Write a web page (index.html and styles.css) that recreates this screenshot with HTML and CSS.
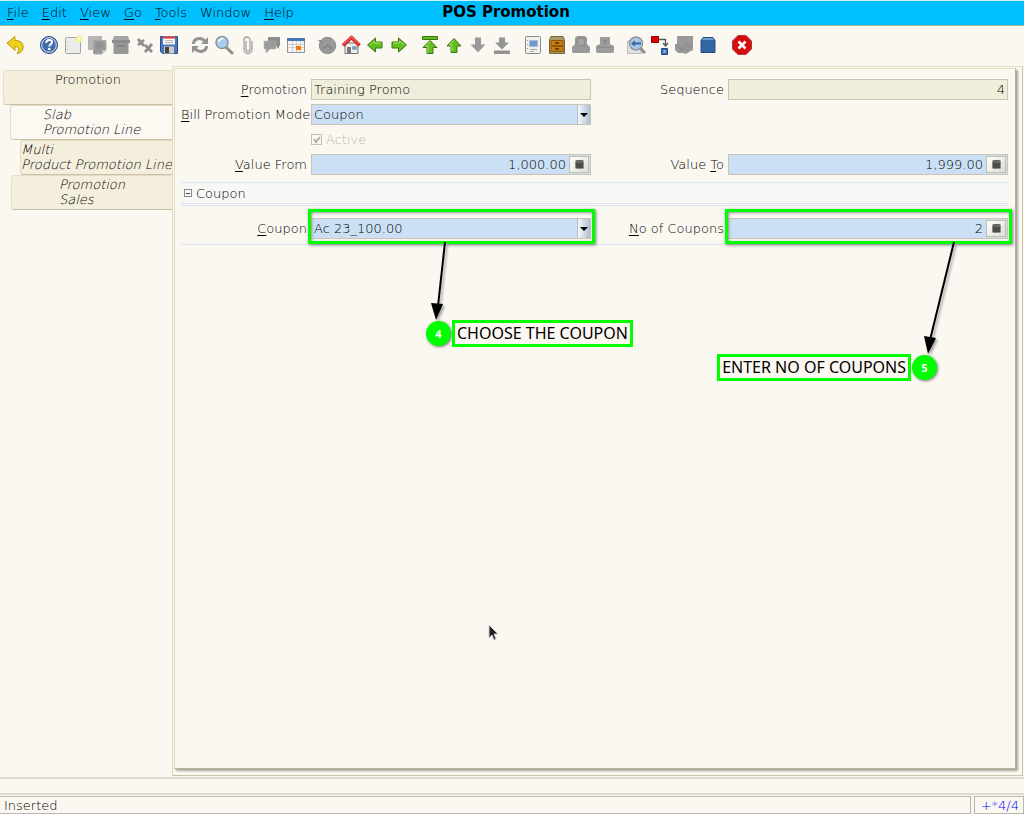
FILE: index.html
```
<!DOCTYPE html>
<html lang="en">
<head>
<meta charset="UTF-8">
<meta name="viewport" content="width=device-width, initial-scale=1.0">
<title>POS Promotion</title>
<link rel="stylesheet" href="styles.css">
</head>
<body>
<header class="menubar">
  <nav class="menus">
    <a href="#"><u>F</u>ile</a>
    <a href="#"><u>E</u>dit</a>
    <a href="#"><u>V</u>iew</a>
    <a href="#"><u>G</u>o</a>
    <a href="#"><u>T</u>ools</a>
    <a href="#">Window</a>
    <a href="#"><u>H</u>elp</a>
  </nav>
  <h1>POS Promotion</h1>
</header>

<div class="toolbar">
  <div class="tools edge">
    <button type="button" aria-label="Undo"><svg viewBox="0 0 20 20"><path d="M2 8l8-6.500v4c6 0 9 3 8 8-1 3-3 5-6 5 3-3 2-7-2-7v4z" fill="#f0d21c" stroke="#b59a10"/></svg></button>
  </div>
  <div class="tools">
    <button type="button" aria-label="Help"><svg viewBox="0 0 20 20"><circle cx="10" cy="10" r="8.500" fill="#3f6cab" stroke="#2c4d80"/><circle cx="10" cy="10" r="7.300" fill="none" stroke="#dfe8f4"/><path d="M7.200 8c0-4 5.800-4 5.800-.8 0 2-2.700 2-2.700 4.300" fill="none" stroke="#fff" stroke-width="2"/><circle cx="10.200" cy="14" r="1.300" fill="#fff"/></svg></button>
    <button type="button" aria-label="New"><svg viewBox="0 0 20 20"><rect x="2.500" y="2.500" width="15" height="16" rx="1" fill="#ececea" stroke="#a2a49f"/><path d="M4.500 6v1M4.500 10v1M4.500 14v1" stroke="#bbb"/><circle cx="16" cy="4" r="3.500" fill="#f4ee91"/><circle cx="16" cy="4" r="1.500" fill="#fffde0"/></svg></button>
    <button type="button" aria-label="Copy"><svg viewBox="0 0 20 20"><path d="M1 1h14v14H1z" fill="#b5b5b5"/><path d="M6.500 5.500h12.500v9.500l-4 4H6.500z" fill="#999" stroke="#aaa"/><path d="M9 9h7M9 11h7M9 13h5" stroke="#8a8a8a"/><path d="M15 19v-4h4" fill="#c4c4c4"/></svg></button>
    <button type="button" aria-label="Delete"><svg viewBox="0 0 20 20"><path d="M3 1h14l2 6H1z" fill="#a5a5a5"/><path d="M1 5h18v3H1z" fill="#8c8c8c"/><path d="M2.500 8h15v11h-15z" fill="#989898"/><path d="M6 11h8" stroke="#858585" stroke-width="2"/></svg></button>
    <button type="button" aria-label="Delete selection"><svg viewBox="0 0 20 20"><path d="M3 4l6 7M9 5l-6 5M10 10l7 7M17 9l-7 8" stroke="#8e8e8e" stroke-width="2.800"/></svg></button>
    <button type="button" aria-label="Save"><svg viewBox="0 0 20 20"><path d="M1.500 1.500h17v17h-15l-2-2z" fill="#4c78b8" stroke="#274e8c"/><path d="M4 1.500h12v8H4z" fill="#f7f7f7"/><path d="M4 1.500h12v2H4z" fill="#e03030"/><path d="M6 5.500h8M6 7.500h8" stroke="#bbb"/><path d="M5 11.500h10v7H5z" fill="#ccc"/><path d="M6 12h4v6H6z" fill="#444"/></svg></button>
  </div>
  <div class="tools">
    <button type="button" aria-label="Refresh"><svg viewBox="0 0 20 20"><path d="M3.500 9c0-6 8-7 11-3M16.500 11c0 6-8 7-11 3" fill="none" stroke="#929292" stroke-width="3"/><path d="M18 2v7h-7zM2 18v-7h7z" fill="#929292"/></svg></button>
    <button type="button" aria-label="Find"><svg viewBox="0 0 20 20"><path d="M12 12l6 6" stroke="#8d8f8a" stroke-width="3" stroke-linecap="round"/><circle cx="8" cy="7.500" r="6" fill="#a9cdf0" stroke="#8c9299" stroke-width="1.500"/><path d="M4.500 7c1-3 3-4 5-3" fill="none" stroke="#e9f4ff" stroke-width="2"/></svg></button>
    <button type="button" aria-label="Attachment"><svg viewBox="0 0 20 20"><path d="M8 6v8c0 3 4 3 4 0V5c0-4-6-4-6 0v9c0 6 8 6 8 0V6" fill="none" stroke="#a3a3a3" stroke-width="1.300"/></svg></button>
    <button type="button" aria-label="Chat"><svg viewBox="0 0 20 20"><path d="M7 2h10q1 0 1 1v7q0 1-1 1v3l-3-3H7q-1 0-1-1V3q0-1 1-1z" fill="#8c8c8c"/><path d="M3 6h10q1 0 1 1v6q0 1-1 1H8l-4 4v-4H3q-1 0-1-1V7q0-1 1-1z" fill="#9c9c9c" stroke="#b3b3b3" stroke-width=".5"/></svg></button>
    <button type="button" aria-label="Grid toggle"><svg viewBox="0 0 20 20"><path d="M1.500 3.500h17v14h-17z" fill="#f3f3f3" stroke="#91948f"/><path d="M1 3h18v3H1z" fill="#4377b5"/><path d="M2 9.500h16M2 12.500h16M6.500 6v11M10.500 6v11M14.500 6v11" stroke="#cfcfcf"/><path d="M10 11h5v4h-5z" fill="#f57900"/></svg></button>
  </div>
  <div class="tools">
    <button type="button" aria-label="History"><svg viewBox="0 0 20 20"><circle cx="10.500" cy="10.500" r="8.200" fill="#999" stroke="#8a8a8a"/><path d="M1 5h4v4z" fill="#8a8a8a"/><path d="M6 14l5-4 4 4" fill="none" stroke="#808080" stroke-width="1.500"/></svg></button>
    <button type="button" aria-label="Home"><svg viewBox="0 0 20 20"><path d="M4 8h13v10.500H4z" fill="#eee" stroke="#777"/><path d="M6 12h4v6.500H6z" fill="#777"/><path d="M11.500 11.500h4v3h-4z" fill="#719fcd" stroke="#888" stroke-width=".5"/><path d="M2 10.500l8.500-8 8 8" fill="none" stroke="#c22" stroke-width="3.600" stroke-linejoin="round"/><path d="M2.500 9.500l8-7.500 7.500 7.500" fill="none" stroke="#f25c5c" stroke-width="1.400"/></svg></button>
    <button type="button" aria-label="Previous tab"><svg viewBox="0 0 20 20"><path d="M2.500 10l8-7v4h6.500v6h-6.500v4z" fill="#62bf1e" stroke="#38750c"/><path d="M5 10l4.500-4v2H16" fill="none" stroke="#a7e36e"/></svg></button>
    <button type="button" aria-label="Next tab"><svg viewBox="0 0 20 20"><path d="M17.500 10l-8-7v4H3v6h6.500v4z" fill="#62bf1e" stroke="#38750c"/><path d="M15 10l-4.500-4v2H4" fill="none" stroke="#a7e36e"/></svg></button>
  </div>
  <div class="tools">
    <button type="button" aria-label="First record"><svg viewBox="0 0 20 20"><path d="M2.500 1.500h15v3h-15zM10 5.500l7 7h-4v6H7v-6H3z" fill="#62bf1e" stroke="#38750c"/><path d="M10 7l-4 4.500h2v6" fill="none" stroke="#a7e36e"/></svg></button>
    <button type="button" aria-label="Previous record"><svg viewBox="0 0 20 20"><path d="M10 3.500l7 7.500h-4v6.500H7V11H3z" fill="#62bf1e" stroke="#38750c"/><path d="M10 5l-4.500 5H8v6.500" fill="none" stroke="#a7e36e"/></svg></button>
    <button type="button" aria-label="Next record"><svg viewBox="0 0 20 20"><path d="M10 17.500l7.500-8H13v-7H7v7H2.500z" fill="#999"/></svg></button>
    <button type="button" aria-label="Last record"><svg viewBox="0 0 20 20"><path d="M10 14.500l7-7h-4v-5H7v5H3zM2 15.500h16v3.500H2z" fill="#929292"/></svg></button>
  </div>
  <div class="tools">
    <button type="button" aria-label="Report"><svg viewBox="0 0 20 20"><rect x="2.500" y="1.500" width="15" height="17" rx="1" fill="#f1f1ef" stroke="#888a85"/><path d="M6.500 5.500h8v6h-8z" fill="#6c98cd" stroke="#a9bed6"/><path d="M7 14.500h7M7 16.500h4" stroke="#aaa"/><path d="M4.500 5v1M4.500 9v1M4.500 13v1" stroke="#999"/></svg></button>
    <button type="button" aria-label="Archive"><svg viewBox="0 0 20 20"><path d="M4 1.500h12l1.500 3v14h-15v-14z" fill="#a99a68" stroke="#75683e"/><path d="M4 5.500h12v5H4zM4 11.500h12v5H4z" fill="#cc7e0b" stroke="#8f5902"/><path d="M8 8h4M8 14h4" stroke="#4f3607" stroke-width="1.500"/></svg></button>
    <button type="button" aria-label="Print preview"><svg viewBox="0 0 20 20"><path d="M6 1h8l2 2v6l3 3v5l-1 1H2l-1-1v-5l3-3V3z" fill="#999"/><circle cx="10" cy="7" r="4" fill="#a4a4a4" stroke="#8a8a8a"/><path d="M12 10l4 3" stroke="#8a8a8a" stroke-width="1.500"/></svg></button>
    <button type="button" aria-label="Print"><svg viewBox="0 0 20 20"><path d="M5 2h10v7l4 2v6l-1 1H2l-1-1v-6l4-2z" fill="#9c9c9c"/><path d="M10 4v5M8 6h4" stroke="#868686" stroke-width="1.500"/><path d="M2 12.500h16" stroke="#8c8c8c"/></svg></button>
  </div>
  <div class="tools">
    <button type="button" aria-label="Zoom across"><svg viewBox="0 0 20 20"><path d="M1.500 6h14v12.500h-14z" fill="#e2e2e0" stroke="#bbb"/><path d="M14 13l5 5" stroke="#8d8f8a" stroke-width="3"/><circle cx="10" cy="8.500" r="6.500" fill="#a9c8e6" stroke="#91979d" stroke-width="1.500"/><path d="M5 8.500l4-3v2h6v2H9v2z" fill="#3465a4"/></svg></button>
    <button type="button" aria-label="Workflow"><svg viewBox="0 0 20 20"><path d="M1.500 1.500h7v6h-7z" fill="#d00" stroke="#900"/><path d="M9 4.500h6.500V10M13 8l2.500 3L18 8" fill="none" stroke="#555" stroke-width="1.300"/><path d="M11.500 13.500h6v6h-6z" fill="#3e6fae" stroke="#204a87"/><path d="M13.500 15.500h2v2h-2z" fill="#b8d0ec"/></svg></button>
    <button type="button" aria-label="Request"><svg viewBox="0 0 20 20"><path d="M3 1h16v14l-4 2-3 2-3-1H4l-3-3V9h2z" fill="#999"/><path d="M2 11l5 3 5-5 6 3M5 17l5-3 5 2" fill="none" stroke="#868686"/></svg></button>
    <button type="button" aria-label="Product info"><svg viewBox="0 0 20 20"><path d="M5 2.500h10l2 3v12H3v-12z" fill="#3465a4" stroke="#284f84"/><path d="M5 3h10l1 2H4z" fill="#6f9bd0"/></svg></button>
  </div>
  <div class="tools edge">
    <button type="button" aria-label="Exit"><svg viewBox="0 0 20 20"><path d="M6 .5h8L19.500 6v8L14 19.500H6L.5 14V6z" fill="#d40e0e" stroke="#b33"/><path d="M6.500 6.500l7 7M13.500 6.500l-7 7" stroke="#fff" stroke-width="2.600"/></svg></button>
  </div>
</div>

<main class="window">
  <nav class="tabs">
    <button type="button" class="tab main-tab"><span>Promotion</span></button>
    <button type="button" class="tab slab current"><span>Slab<br>Promotion Line</span></button>
    <button type="button" class="tab multi"><span>Multi<br>Product Promotion Line</span></button>
    <button type="button" class="tab sales"><span>Promotion<br>Sales</span></button>
  </nav>

  <div class="frame">
    <form class="panel">
      <div class="fields">
        <label for="promotion"><u>P</u>romotion</label>
        <div class="field readonly"><input type="text" id="promotion" value="Training Promo" readonly></div>
        <label for="sequence">Sequence</label>
        <div class="field readonly number"><input type="text" id="sequence" value="4" readonly></div>
      </div>
      <div class="fields">
        <label for="mode"><u>B</u>ill Promotion Mode</label>
        <div class="field combo"><select id="mode"><option>Coupon</option></select></div>
      </div>
      <div class="fields">
        <div class="check">
          <input type="checkbox" id="active" checked disabled>
          <label for="active">Active</label>
        </div>
      </div>
      <div class="fields">
        <label for="valueFrom"><u>V</u>alue From</label>
        <div class="field number">
          <input type="text" id="valueFrom" value="1,000.00">
          <button type="button" class="calc" aria-label="Calculator"></button>
        </div>
        <label for="valueTo">Value <u>T</u>o</label>
        <div class="field number">
          <input type="text" id="valueTo" value="1,999.00">
          <button type="button" class="calc" aria-label="Calculator"></button>
        </div>
      </div>

      <h2 class="group"><button type="button" class="toggle" aria-label="Collapse"></button>Coupon</h2>

      <div class="fields coupon">
        <label for="coupon"><u>C</u>oupon</label>
        <div class="field combo">
          <select id="coupon"><option>Ac 23_100.00</option></select>
          <span class="highlight"></span>
          <svg class="arrow arrow-left" viewBox="0 0 30 84"><path d="M20 2L13 66" stroke="#000" stroke-width="2"/><path d="M6 63l12 1-7 16z"/></svg>
          <div class="callout callout-left"><b>4</b><span>CHOOSE THE COUPON</span></div>
        </div>
        <label for="count"><u>N</u>o of Coupons</label>
        <div class="field number">
          <input type="text" id="count" value="2">
          <button type="button" class="calc" aria-label="Calculator"></button>
          <span class="highlight"></span>
          <svg class="arrow arrow-right" viewBox="0 0 40 116"><path d="M32 2L8 100" stroke="#000" stroke-width="2"/><path d="M2 96l12 2-8 16z"/></svg>
          <div class="callout callout-right"><span>ENTER NO OF COUPONS</span><b>5</b></div>
        </div>
      </div>

      <svg class="pointer" viewBox="0 0 12 18"><path d="M1 1v13l3-3 2 5 2-1-2-5h4z" fill="#222" stroke="#ccc"/></svg>
    </form>
  </div>
</main>

<div class="strip"></div>
<footer class="status">
  <div class="message">Inserted</div>
  <div class="record">+*4/4</div>
</footer>
</body>
</html>
```
FILE: styles.css
```
*, *::before, *::after {
  box-sizing: border-box;
}
body {
  display: flex;
  flex-direction: column;
  min-height: 100vh;
  margin: 0;
  font-family: "DejaVu Sans Light", "DejaVu Sans", sans-serif;
  font-size: 13px;
  line-height: 15px;
  color: #000;
  background-color: #fbf8f1;
}
button, input, select {
  margin: 0;
  padding: 0;
  border: 0;
  font: inherit;
  color: inherit;
  background: none;
}
u {
  text-underline-offset: 2px;
}

/* menu bar */
.menubar {
  display: grid;
  grid-template-columns: 1fr auto 1fr;
  align-items: center;
  height: 26px;
  padding: 0 12px 1px 0;
  background-color: #00bfff;
  border-top: 1px solid #c9f2fb;
  border-bottom: 1px solid #a5b9a9;
}
.menus {
  display: flex;
  gap: 13px;
  padding-left: 7px;
}
.menus a {
  color: #000;
  text-decoration: none;
}
.menubar h1 {
  margin: 0;
  font-family: "DejaVu Sans", sans-serif;
  font-size: 15px;
  color: #000;
}

/* toolbar */
.toolbar {
  display: flex;
  align-items: center;
  gap: 7px;
  height: 40px;
  padding: 0 3px 2px;
}
.tools {
  display: flex;
}
.tools.edge:first-child {
  margin-right: 3px;
}
.tools.edge:last-child {
  margin-left: 3px;
}
.tools button {
  display: flex;
  justify-content: center;
  width: 24px;
}
.tools svg {
  width: 20px;
  height: 20px;
}

/* tabs and form panel */
.window {
  display: flex;
  flex: 1;
}
.tabs {
  display: flex;
  flex-direction: column;
  flex: none;
  width: 172px;
  padding-top: 4px;
}
.tab {
  display: flex;
  justify-content: center;
  height: 35px;
  padding-top: 1px;
  text-align: left;
  font-style: italic;
  white-space: nowrap;
  background-color: #f4eedd;
  border: 1px solid #e6dcc5;
  border-right: 0;
  border-bottom-color: #c9c1aa;
  border-radius: 3px 0 0 3px;
}
.main-tab {
  margin-left: 3px;
  font-style: normal;
}
.slab {
  margin-left: 10px;
}
.multi {
  margin-left: 20px;
}
.sales {
  margin-left: 11px;
}
.current {
  background-color: #fcf9f3;
}
.frame {
  display: flex;
  flex: 1;
  margin-right: 1px;
  padding: 1px 6px 6px 1px;
  border: 1px solid #e6dbc0;
  border-bottom-color: #c9c1aa;
  border-right-color: #c9c1aa;
}
.panel {
  position: relative;
  flex: 1;
  padding: 10px 7px 10px 6px;
  border: 1px solid #e6dbc0;
  border-bottom-color: #b5afa0;
  border-right-color: #b5afa0;
  box-shadow: 2px 2px 2px #aaa69c;
}
.fields {
  display: grid;
  grid-template-columns: 126px 1fr 129px 1fr;
  align-items: center;
  gap: 4px;
  min-height: 21px;
  margin-bottom: 4px;
}
.fields > label {
  text-align: right;
  line-height: 21px;
  white-space: nowrap;
}
.check {
  display: flex;
  align-items: center;
  gap: 4px;
  grid-column: 2 / -1;
  color: #bdb6a6;
}
.check input {
  appearance: none;
  width: 11px;
  height: 11px;
  border: 1px solid #c9c1b0;
  background: url("data:image/svg+xml,%3Csvg xmlns='http://www.w3.org/2000/svg' viewBox='0 0 9 9'%3E%3Cpath d='M2 4l2 3 4-5' fill='none' stroke='%23b5ae9e' stroke-width='2'/%3E%3C/svg%3E");
}

/* inputs */
.field {
  position: relative;
  display: flex;
  min-width: 0;
  height: 21px;
  background-color: #cbe0f5;
  border: 1px solid #cbc4b2;
}
.readonly {
  background-color: #f0eedb;
}
.field input, .field select {
  flex: 1;
  min-width: 0;
  padding: 0 2px 1px;
  appearance: none;
  outline: none;
}
.number input {
  text-align: right;
}
.combo::after {
  content: "";
  width: 13px;
  border-left: 1px solid #b5bdc4;
  background:
    url("data:image/svg+xml,%3Csvg xmlns='http://www.w3.org/2000/svg' viewBox='0 0 8 4'%3E%3Cpath d='M0 0h8L4 4z'/%3E%3C/svg%3E") 50% 50% / 8px 4px no-repeat,
    linear-gradient(to right, #f4f8fc, #adbfd2);
}
.calc {
  display: flex;
  align-items: center;
  justify-content: center;
  width: 20px;
  margin: 1px;
  border: 1px solid #c4bdac;
  background: linear-gradient(135deg, #fff, #dfdcd3);
}
.calc::before {
  content: "";
  width: 9px;
  height: 9px;
  border-radius: 2px;
  border: 1px solid #888a85;
  border-top: 3px solid #666864;
  background-color: #4b4d4a;
}

/* collapsible group */
.group {
  display: flex;
  align-items: center;
  gap: 4px;
  height: 24px;
  margin: 7px 0 0;
  padding: 0 3px;
  font-size: 13px;
  font-weight: normal;
  background-color: #f7f7f6;
  border-top: 1px solid #dbe5f7;
  border-bottom: 3px double #dde3f2;
}
.toggle {
  width: 8px;
  height: 8px;
  border: 1px solid #888;
  background: linear-gradient(#444, #444) 50% 50% / 4px 1px no-repeat;
}
.coupon {
  padding: 12px 0 5px;
  border-bottom: 1px solid #dde5f3;
}

/* guide marks drawn over the form */
.highlight {
  position: absolute;
  inset: -10px -5px -6px -4px;
  border: 3px solid #0f0;
  box-shadow: 1px 1px 3px #777, inset 1px 1px 3px #999;
  pointer-events: none;
}
.arrow {
  position: absolute;
  filter: drop-shadow(2px 2px 1px #aaa);
}
.arrow-left {
  top: 21px;
  left: 113px;
  width: 30px;
  height: 84px;
}
.arrow-right {
  top: 21px;
  right: 45px;
  width: 40px;
  height: 116px;
}
.callout {
  position: absolute;
  display: flex;
  align-items: center;
  gap: 1px;
  font-family: "Noto Sans", sans-serif;
  font-size: 16px;
  color: #000;
  white-space: nowrap;
}
.callout span {
  padding: 0 2px;
  line-height: 21px;
  border: 3px solid #0f0;
}
.callout b {
  width: 25px;
  border-radius: 50%;
  font-size: 11px;
  line-height: 25px;
  text-align: center;
  color: #fff;
  background-color: #0f0;
  box-shadow: 1px 1px 3px #777;
}
.callout-left {
  top: 101px;
  left: 114px;
}
.callout-right {
  top: 135px;
  right: 70px;
}
.pointer {
  position: absolute;
  top: 555px;
  left: 313px;
  width: 12px;
  height: 18px;
}

/* bottom */
.strip {
  height: 18px;
  margin-top: 1px;
  border-top: 2px solid #e0dbcd;
  border-bottom: 2px solid #e0dbcd;
}
.status {
  display: flex;
  gap: 3px;
  height: 19px;
  padding-top: 1px;
}
.message, .record {
  padding: 1px 4px;
  border: 1px solid #b9b6ae;
}
.message {
  flex: 1;
  border-left: 0;
}
.record {
  min-width: 50px;
  padding-left: 6px;
  color: #00f;
}
```
